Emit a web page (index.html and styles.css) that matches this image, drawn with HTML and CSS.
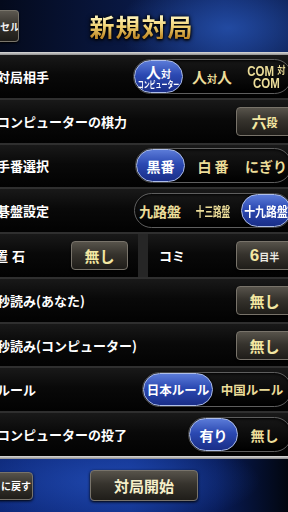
FILE: index.html
```html
<!DOCTYPE html>
<html>
	<head>
		<meta charset="UTF-8">
		<title>新規対局</title>
		<link rel="stylesheet" href="styles.css">
	</head>

	<body>
		<div class="screen">
			<div class="header">
				<button class="h_btn">セル</button>
				<h1 class="title">新規対局</h1>
				<span></span>
			</div>
			<div class="rule"></div>

			<div class="rows">
				<div class="row">
					<p class="label">対局相手</p>
					<div class="seg">
						<span class="s on w49"><span class="l1">人<small>対</small></span><span class="l2">コンピューター</span></span>
						<span class="s w58"><span class="l1">人<small>対</small>人</span></span>
						<span class="s w50 com"><span class="c1">COM <small>対</small></span><span class="c1">COM</span></span>
					</div>
				</div>
				<div class="row">
					<p class="label">コンピューターの棋力</p>
					<button class="btn">六<small>段</small></button>
				</div>
				<div class="row">
					<p class="label">手番選択</p>
					<div class="seg">
						<span class="s on w49">黒番</span>
						<span class="s w56 wide">白番</span>
						<span class="s w50">にぎり</span>
					</div>
				</div>
				<div class="row">
					<p class="label">碁盤設定</p>
					<div class="seg">
						<span class="s w50">九路盤</span>
						<span class="s w56"><span class="narrow">十三路盤</span></span>
						<span class="s on w50"><span class="narrow2">十九路盤</span></span>
					</div>
				</div>
				<div class="row split">
					<div class="cell left">
						<p class="label spaced">置石</p>
						<button class="btn inner">無し</button>
					</div>
					<div class="divider"></div>
					<div class="cell right">
						<p class="label">コミ</p>
						<button class="btn"><span class="num">6</span><small class="wh">目半</small></button>
					</div>
				</div>
				<div class="row">
					<p class="label">秒読み(あなた)</p>
					<button class="btn">無し</button>
				</div>
				<div class="row">
					<p class="label">秒読み(コンピューター)</p>
					<button class="btn">無し</button>
				</div>
				<div class="row">
					<p class="label">ルール</p>
					<div class="seg">
						<span class="s on w70 rule_t">日本ルール</span>
						<span class="s w78 rule_t">中国ルール</span>
					</div>
				</div>
				<div class="row">
					<p class="label">コンピューターの投了</p>
					<div class="seg">
						<span class="s on w49">有り</span>
						<span class="s w53">無し</span>
					</div>
				</div>
			</div>

			<div class="rule"></div>
			<div class="footer">
				<button class="f_btn back">に戻す</button>
				<button class="f_btn start">対局開始</button>
			</div>
		</div>
	</body>
</html>
```

FILE: styles.css
```css
* {
	margin: 0;
	padding: 0;
	box-sizing: border-box;
}

body {
	width: 288px;
	height: 512px;
	overflow: hidden;
	background-color: #000;
	font-family: "Noto Sans CJK JP", sans-serif;
}

button {
	font-family: "Noto Sans CJK JP", sans-serif;
	font-weight: bold;
	outline: none;
	cursor: pointer;
}

.screen {
	width: 288px;
	height: 512px;
	display: flex;
	flex-direction: column;
	overflow: hidden;
}

/* header */
.header {
	height: 52px;
	display: grid;
	grid-template-columns: 19px 1fr 24px;
	align-items: center;
	background:
		radial-gradient(ellipse 110px 55px at 228px 28px, rgba(36, 78, 168, 0.9), transparent),
		linear-gradient(90deg, #040a1c 0%, #091843 45%, #0e2462 78%, #0b1c4c 100%);
}

.h_btn {
	width: 19px;
	height: 32px;
	border: 1px solid #7a766c;
	border-left: 0;
	border-radius: 0 4px 4px 0;
	background: linear-gradient(#5c5850, #34312b 50%, #1e1c18);
	color: #f2f2f2;
	font-size: 10px;
	text-align: right;
	padding-right: 1px;
	white-space: nowrap;
	overflow: hidden;
	box-shadow: 0 1px 2px #000;
}

.title {
	text-align: center;
	font-size: 25px;
	font-weight: bold;
	letter-spacing: 1px;
	line-height: 1;
	background: linear-gradient(#fff6c0 8%, #f1d273 50%, #c18b2a 92%);
	-webkit-background-clip: text;
	background-clip: text;
	color: transparent;
	filter: drop-shadow(0 1px 1px #000) drop-shadow(0 0 2px #000);
}

.rule {
	height: 3px;
	background: linear-gradient(#dcdcdc, #8c8c8c);
}

/* rows */
.rows {
	height: 401px;
	display: flex;
	flex-direction: column;
}

.row {
	flex: 1;
	display: flex;
	align-items: center;
	justify-content: space-between;
	border-top: 2px solid #2f2f2f;
	background: linear-gradient(#191919, #090909 45%, #020202);
	overflow: hidden;
}

.row:first-child {
	border-top: 0;
}

.label {
	margin-left: -3px;
	color: #fff;
	font-size: 13px;
	font-weight: bold;
	white-space: nowrap;
}

.label.spaced {
	margin-left: -5px;
	letter-spacing: 4px;
}

.seg {
	display: flex;
	height: 35px;
	margin-right: -4px;
	border: 1px solid #5e5e5e;
	border-radius: 18px;
	background: linear-gradient(#171717, #000);
	box-shadow: inset 0 1px 3px #000;
}

.s {
	display: flex;
	flex-direction: column;
	align-items: center;
	justify-content: center;
	color: #ecdd99;
	font-size: 14px;
	font-weight: bold;
	line-height: 1;
	white-space: nowrap;
	border-radius: 17px;
}

.s.wide {
	letter-spacing: 3px;
	padding-left: 3px;
}

.s.rule_t {
	font-size: 12.5px;
}

.s small {
	font-size: 9px;
}

.s.on {
	color: #fff;
	background: linear-gradient(#5b7bd8, #2b49b2 45%, #1a2e88);
	border: 1px solid #aebee9;
	box-shadow: 0 0 2px #000;
}

.w49 { width: 49px; }
.w50 { width: 50px; }
.w53 { width: 53px; }
.w56 { width: 56px; }
.w58 { width: 58px; }
.w70 { width: 70px; }
.w78 { width: 78px; }

.s .l1 {
	font-size: 15px;
}

.s .l1 small {
	font-size: 10px;
}

.s .l2 {
	display: block;
	font-size: 9px;
	margin-top: 1px;
	transform: scaleX(0.66);
}

.com .c1 {
	font-family: "Liberation Sans", sans-serif;
	font-size: 14px;
	line-height: 12px;
	transform: scaleX(0.82);
}

.com .c1 small {
	font-family: "Noto Sans CJK JP", sans-serif;
	font-size: 10px;
	vertical-align: 2px;
}

.narrow {
	display: inline-block;
	font-size: 13px;
	transform: scaleX(0.66);
}

.narrow2 {
	display: inline-block;
	font-size: 13px;
	transform: scaleX(0.84);
}

.btn {
	display: flex;
	align-items: center;
	justify-content: center;
	width: 57px;
	height: 29px;
	margin-right: -5px;
	border: 1px solid #78736a;
	border-radius: 4px;
	background: linear-gradient(#57534b, #36332d 45%, #1f1d19);
	color: #f3e7a2;
	font-size: 15px;
	line-height: 1;
	box-shadow: 0 1px 2px #000;
}

.btn small {
	font-size: 11px;
	margin-top: 2px;
}

.btn .num {
	font-family: "Liberation Sans", sans-serif;
	font-size: 17px;
}

.btn .wh {
	color: #ecebe4;
	font-size: 10px;
}

.btn.inner {
	margin-right: 0;
}

.row.split {
	justify-content: flex-start;
}

.cell {
	height: 100%;
	display: flex;
	align-items: center;
	justify-content: space-between;
}

.cell.left {
	width: 138px;
	padding-right: 10px;
}

.divider {
	width: 10px;
	height: 100%;
	background-color: #262626;
}

.cell.right {
	flex: 1;
	padding-left: 14px;
}

/* footer */
.footer {
	flex: 1;
	display: flex;
	align-items: center;
	background:
		radial-gradient(ellipse 150px 45px at 110px 22px, rgba(34, 76, 180, 0.8), transparent),
		linear-gradient(90deg, #0d2878 0%, #10308a 45%, #081c5a 75%, #02060f 100%);
}

.f_btn {
	border: 1px solid #78736a;
	border-radius: 4px;
	background: linear-gradient(#57534b, #36332d 45%, #1f1d19);
	box-shadow: 0 1px 3px #000;
	white-space: nowrap;
}

.back {
	width: 38px;
	height: 28px;
	margin-left: -5px;
	padding-left: 4px;
	color: #fff;
	font-size: 10px;
}

.start {
	width: 108px;
	height: 31px;
	margin-left: 57px;
	color: #f6efca;
	font-size: 15px;
}
```
